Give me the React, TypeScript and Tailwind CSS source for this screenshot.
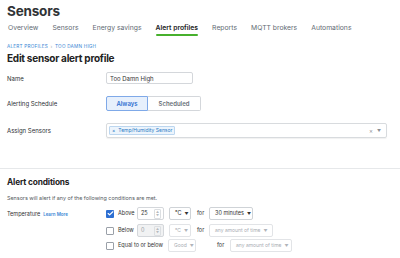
import { Check } from 'lucide-react';

const tabs = ['Overview', 'Sensors', 'Energy savings', 'Alert profiles', 'Reports', 'MQTT brokers', 'Automations'];

function Caret({ muted }: { muted?: boolean }) {
  return <span className={`text-[4px] ml-[3px] ${muted ? 'text-[#b0b4ba]' : 'text-[#333]'}`}>▼</span>;
}

function Checkbox({ checked }: { checked?: boolean }) {
  return checked ? (
    <div className="w-[8px] h-[8px] rounded-[1px] bg-[#2d6fd2] flex items-center justify-center">
      <Check className="w-[7px] h-[7px] text-white" strokeWidth={4} />
    </div>
  ) : (
    <div className="w-[8px] h-[8px] rounded-[1px] border border-[#9aa0a8] bg-white" />
  );
}

function NumberBox({ value, disabled }: { value: string; disabled?: boolean }) {
  return (
    <div
      className={`w-[27px] h-[13px] border border-[#d4d7db] rounded-[2px] flex items-center justify-between pl-[3px] pr-[2px] ${
        disabled ? 'bg-[#f1f2f3] text-[#9a9ea4]' : 'bg-white text-[#333]'
      }`}
    >
      <span>{value}</span>
      <div className="flex flex-col text-[#b5b9be] text-[3px] leading-[4px] border border-[#dcdfe2] rounded-[1px] px-[1px]">
        <span>▲</span>
        <span>▼</span>
      </div>
    </div>
  );
}

function Dropdown({ label, muted, className }: { label: string; muted?: boolean; className?: string }) {
  return (
    <div
      className={`h-[13px] border rounded-[2px] flex items-center whitespace-nowrap px-[5px] ${
        muted ? 'border-[#e2e4e7] text-[#a9adb3] text-[5px]' : 'border-[#cfd3d7] text-[#333]'
      } ${className ?? ''}`}
    >
      <span>{label}</span>
      <Caret muted={muted} />
    </div>
  );
}

export default function App() {
  return (
    <div
      className="w-[400px] h-[258px] overflow-hidden bg-white text-[#2b2f33]"
      style={{ fontFamily: 'Inter, "Liberation Sans", sans-serif' }}
    >
      {/* Header */}
      <div className="px-[7px] pt-[3px]">
        <h1 className="text-[13.5px] font-bold leading-[16px] tracking-[-0.2px] text-[#303336]">Sensors</h1>
        <div className="flex gap-[14px] mt-[3px] pl-[1px] text-[6.8px]">
          {tabs.map((t) =>
            t === 'Alert profiles' ? (
              <div key={t} className="flex flex-col">
                <span className="font-semibold text-[#222] leading-[11px]">{t}</span>
                <div className="h-[2px] bg-[#47b02d] mt-[1px] rounded-full" />
              </div>
            ) : (
              <span key={t} className="text-[#636b74] leading-[11px]">
                {t}
              </span>
            )
          )}
        </div>
      </div>

      {/* Form */}
      <div className="px-[7px] mt-[7px]">
        <div className="text-[4.7px] tracking-[0.2px] text-[#3a86d4] leading-[6px]">
          ALERT PROFILES <span className="text-[#9aa3ad] mx-[1px]">›</span> TOO DAMN HIGH
        </div>
        <h2 className="text-[10px] font-bold leading-[13px] tracking-[-0.25px] mt-[3px] text-[#222]">
          Edit sensor alert profile
        </h2>

        <div className="flex items-center mt-[7px] text-[6px]">
          <span className="w-[99px]">Name</span>
          <div className="w-[87px] h-[12px] border border-[#d4d7db] rounded-[2px] flex items-center px-[3px] text-[#333]">
            Too Damn High
          </div>
        </div>

        <div className="flex items-center mt-[12px] text-[6px]">
          <span className="w-[99px]">Alerting Schedule</span>
          <div className="flex h-[15px] text-[6px] font-semibold">
            <div className="w-[42px] flex items-center justify-center bg-[#e7f0fc] border border-[#7fa9e8] rounded-l-[2px] text-[#2f6fd0]">
              Always
            </div>
            <div className="w-[53px] flex items-center justify-center border border-l-0 border-[#d4d7db] rounded-r-[2px] text-[#6a7078]">
              Scheduled
            </div>
          </div>
        </div>

        <div className="flex items-center mt-[12px] text-[6px]">
          <span className="w-[99px]">Assign Sensors</span>
          <div className="w-[281px] h-[15px] border border-[#d8dbde] rounded-[2px] flex items-center pl-[2px] pr-[5px] shadow-[0_1px_1px_rgba(0,0,0,0.06)]">
            <div className="h-[9px] flex items-center bg-[#ecf4fc] border border-[#bcd6ef] rounded-[1px] text-[#2b7bc4] text-[5px] px-[2px] gap-[3px]">
              <span>×</span>
              <span>Temp/Humidity Sensor</span>
            </div>
            <div className="flex-1" />
            <span className="text-[#8b9096] text-[6px]">×</span>
            <span className="text-[#8b9096] text-[4px] ml-[4px]">▼</span>
          </div>
        </div>
      </div>

      <div className="h-px bg-[#e6e8ea] mt-[30px]" />

      {/* Alert conditions */}
      <div className="px-[7px] mt-[8px]">
        <h3 className="text-[8.3px] font-bold leading-[11px] tracking-[-0.15px] text-[#222]">Alert conditions</h3>
        <p className="text-[5.4px] text-[#555a60] mt-[7px] leading-[7px]">
          Sensors will alert if any of the following conditions are met.
        </p>

        <div className="flex mt-[5px] text-[5.5px]">
          <div className="w-[99px] pt-[3px] flex gap-[3px] items-baseline">
            <span className="text-[#333]">Temperature</span>
            <span className="text-[#3a86d4] text-[4.5px] font-semibold">Learn More</span>
          </div>

          <div className="flex flex-col">
            <div className="flex items-center h-[13px]">
              <Checkbox checked />
              <span className="w-[19px] ml-[4px] text-[#333]">Above</span>
              <NumberBox value="25" />
              <Dropdown label="°C" className="ml-[5px] w-[22px]" />
              <span className="ml-[6px] w-[12px] text-[#333]">for</span>
              <Dropdown label="30 minutes" className="w-[44px]" />
            </div>
            <div className="flex items-center h-[13px] mt-[4px]">
              <Checkbox />
              <span className="w-[19px] ml-[4px] text-[#333]">Below</span>
              <NumberBox value="0" disabled />
              <Dropdown label="°C" muted className="ml-[5px] w-[22px]" />
              <span className="ml-[6px] w-[12px] text-[#333]">for</span>
              <Dropdown label="any amount of time" muted className="w-[64px]" />
            </div>
            <div className="flex items-center h-[13px] mt-[2px]">
              <Checkbox />
              <span className="w-[50px] ml-[4px] text-[#333]">Equal to or below</span>
              <Dropdown label="Good" muted className="w-[28px]" />
              <span className="ml-[21px] w-[13px] text-[#333]">for</span>
              <Dropdown label="any amount of time" muted className="w-[62px]" />
            </div>
          </div>
        </div>
      </div>
    </div>
  );
}
